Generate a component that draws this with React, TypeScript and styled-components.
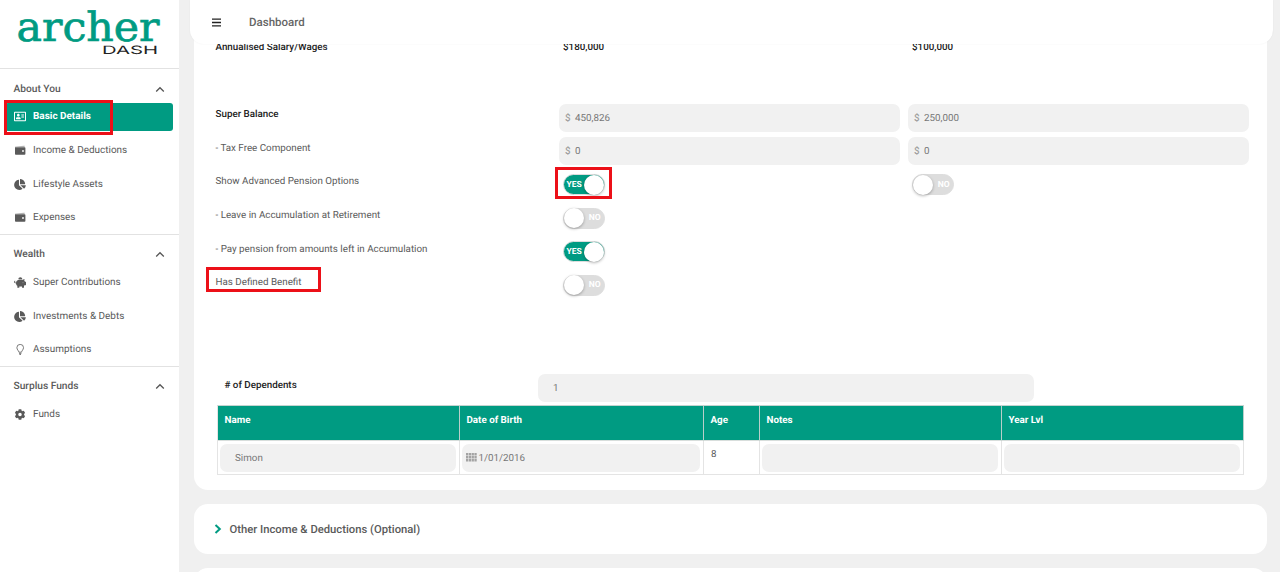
import React from "react";
import styled, { createGlobalStyle } from "styled-components";
import { FaRegAddressCard, FaChartPie, FaPiggyBank, FaCog } from "react-icons/fa";

const GREEN = "#009b82";
const PALE = "#f1f1f1";

const GlobalStyle = createGlobalStyle`
  * { box-sizing: border-box; }
  body {
    margin: 0;
    overflow: hidden;
    font-family: Roboto, "Liberation Sans", sans-serif;
    font-size: 9.8px;
    color: #5a5a5a;
    text-rendering: geometricPrecision;
  }
`;

const Page = styled.div`
  position: relative;
  display: flex;
  width: 1280px;
  height: 572px;
  overflow: hidden;
  background: #f0f0f0;
`;

const Sidebar = styled.nav`
  width: 179px;
  flex: none;
  background: #fff;
`;

const Brand = styled.div`
  height: 68px;
`;

const Section = styled.section`
  display: flex;
  flex-direction: column;
  border-top: 1px solid #e2e2e2;
`;

const SectionTitle = styled.div`
  display: flex;
  align-items: center;
  justify-content: space-between;
  height: 30px;
  padding: 10px 14px 0 13.5px;
  font-size: 10.2px;
  font-weight: 500;
`;

const NavItem = styled.a<{ $active?: boolean }>`
  display: flex;
  align-items: center;
  height: 27.7px;
  margin: 4px 6px 2px 5px;
  padding-left: 9px;
  gap: 7px;
  border-radius: 3px;
  font-size: 9.95px;
  color: ${(p) => (p.$active ? "#fff" : "#5a5a5a")};
  background: ${(p) => (p.$active ? GREEN : "transparent")};
  font-weight: ${(p) => (p.$active ? 700 : 400)};
  svg { width: 12px; height: 11px; flex: none; }
`;

const Main = styled.main`
  position: relative;
  flex: 1;
  min-width: 0;
  padding: 0 13px 0 15px;
`;

const Header = styled.header`
  position: absolute;
  top: 0;
  left: 11px;
  width: 1083px;
  height: 44px;
  display: flex;
  align-items: center;
  gap: 28px;
  padding-left: 22px;
  border-radius: 0 0 14px 14px;
  background: #fff;
  box-shadow: 0 0 2px rgba(0, 0, 0, 0.06);
  font-size: 11.5px;
  font-weight: 500;
  color: #666;
`;

const Card = styled.section<{ $height: number; $first?: boolean }>`
  height: ${(p) => p.$height}px;
  margin-bottom: 14px;
  padding: ${(p) => (p.$first ? "30px 17px 0 21.5px" : "0 20px")};
  border-radius: ${(p) => (p.$first ? "0 0 14px 14px" : "14px")};
  background: #fff;
`;

const FieldRow = styled.div`
  display: grid;
  grid-template-columns: 335.5px 341.5px 341.5px;
  column-gap: 7.5px;
  height: 33.65px;
`;

const Label = styled.div<{ $strong?: boolean; $indent?: number }>`
  padding: 8.2px 0 0 ${(p) => p.$indent ?? 0}px;
  line-height: 20px;
  color: ${(p) => (p.$strong ? "#222" : "#5a5a5a")};
  font-weight: ${(p) => (p.$strong ? 500 : 400)};
`;

const Money = styled.div`
  display: flex;
  align-items: center;
  height: 28px;
  margin-top: 6.8px;
  padding: 1px 0 0 6.5px;
  gap: 4.5px;
  border-radius: 7px;
  background: ${PALE};
  color: #777;
  i { font-style: normal; font-weight: 500; color: #a0a0a0; }
`;

const Toggle = styled.div<{ $on?: boolean }>`
  display: flex;
  align-items: center;
  justify-content: space-between;
  flex-direction: ${(p) => (p.$on ? "row" : "row-reverse")};
  width: 42px;
  height: 21px;
  margin: 9.8px 0 0 4px;
  padding: ${(p) => (p.$on ? "0 0 0 3px" : "0 3px 0 0")};
  border: 1px solid #ddd;
  border-radius: 11px;
  background: ${(p) => (p.$on ? GREEN : "#ddd")};
  color: #fff;
  font-size: 8.5px;
  font-weight: 700;
`;

const Knob = styled.span`
  width: 20px;
  height: 20px;
  border-radius: 50%;
  background: #fff;
  box-shadow: 0 1px 3px rgba(0, 0, 0, 0.3);
`;

const Spacer = styled.div<{ $h: number }>`
  height: ${(p) => p.$h}px;
`;

const DependentsRow = styled.div`
  display: flex;
  height: 31px;
  padding-left: 9px;
`;

const DependentsLabel = styled(Label)`
  width: 313.5px;
  padding-top: 1.7px;
`;

const Input = styled.div<{ $w?: number; $pad?: number }>`
  display: flex;
  align-items: center;
  gap: 1.5px;
  width: ${(p) => (p.$w ? `${p.$w}px` : "auto")};
  height: 28px;
  padding: 1px 0 0 ${(p) => p.$pad ?? 15}px;
  border-radius: 7px;
  background: ${PALE};
  color: #777;
`;

const Table = styled.div`
  display: grid;
  grid-template-columns: 242px 244px 56px 242px 242px;
  width: 1027px;
  margin-left: 1.5px;
  border-left: 1px solid #e4e4e4;
  border-top: 1px solid #c4d4d0;
`;

const HeadCell = styled.div`
  height: 35px;
  padding: 9.2px 6.5px 0;
  border-right: 1px solid #b9cfca;
  border-bottom: 1px solid #d8dedc;
  background: ${GREEN};
  color: #fff;
  font-weight: 700;
`;

const Cell = styled.div`
  height: 34px;
  padding: 3px 3px 0 2px;
  border-right: 1px solid #e4e4e4;
  border-bottom: 1px solid #e4e4e4;
`;

const AgeText = styled.div`
  padding: 5.5px 5px 0;
`;

const Expander = styled.div`
  display: flex;
  align-items: center;
  height: 50px;
  gap: 7.5px;
  padding-top: 1px;
  font-size: 11.25px;
  font-weight: 500;
`;

const Marker = styled.div<{ $x: number; $y: number; $w: number; $h: number }>`
  position: absolute;
  left: ${(p) => p.$x}px;
  top: ${(p) => p.$y}px;
  width: ${(p) => p.$w}px;
  height: ${(p) => p.$h}px;
  border: 3px solid #ec1018;
`;

const ChevronUp = () => (
  <svg width="10" height="7" viewBox="0 0 10 7" fill="none" stroke="#555" strokeWidth="1.3">
    <path d="M1.2 5.5 5 1.7 8.8 5.5" />
  </svg>
);

const WalletIcon = () => (
  <svg viewBox="0 0 12 11" fill="currentColor">
    <path d="M1 1.4 10.6 .7V1.7H1Z" opacity=".6" />
    <path fillRule="evenodd" d="M1 2.2H10.6Q11.4 2.2 11.4 3V9Q11.4 9.8 10.6 9.8H1.8Q1 9.8 1 9ZM9 5.1A.9.9 0 1 0 9 6.9.9.9 0 1 0 9 5.1Z" />
  </svg>
);

const BulbIcon = () => (
  <svg viewBox="0 0 12 11" fill="none" stroke="currentColor" strokeWidth=".8">
    <path d="M4.9 8.2C4.7 6.6 2.9 5.8 2.9 3.6A3.3 3.2 0 0 1 9.5 3.6C9.5 5.8 7.7 6.6 7.5 8.2ZM5 9.4H7.4M5.4 10.5H7" />
  </svg>
);

const DateGridIcon = () => (
  <svg width="11" height="10" viewBox="0 0 11 10" fill="#a3a3a3">
    {[0, 1, 2].map((r) =>
      [0, 1, 2, 3].map((c) => (
        <rect key={`${r}-${c}`} x={c * 2.8} y={r * 3} width="2.3" height="2.5" />
      ))
    )}
  </svg>
);

const Switch = ({ on }: { on?: boolean }) => (
  <Toggle $on={on}>
    <span>{on ? "YES" : "NO"}</span>
    <Knob />
  </Toggle>
);

const Amount = ({ value }: { value: string }) => (
  <Money>
    <i>$</i>
    <span>{value}</span>
  </Money>
);

const sections = [
  {
    title: "About You",
    items: [
      { label: "Basic Details", Icon: FaRegAddressCard, active: true },
      { label: "Income & Deductions", Icon: WalletIcon },
      { label: "Lifestyle Assets", Icon: FaChartPie },
      { label: "Expenses", Icon: WalletIcon },
    ],
  },
  {
    title: "Wealth",
    items: [
      { label: "Super Contributions", Icon: FaPiggyBank },
      { label: "Investments & Debts", Icon: FaChartPie },
      { label: "Assumptions", Icon: BulbIcon },
    ],
  },
  { title: "Surplus Funds", items: [{ label: "Funds", Icon: FaCog }] },
];

export default function App() {
  return (
    <Page>
      <GlobalStyle />
      <Sidebar>
        <Brand>
          <svg width="179" height="68">
            <text x="16.5" y="40.5" fontFamily="DejaVu Serif" fontSize="40.5" fill={GREEN} stroke={GREEN} strokeWidth=".7" textLength="143" lengthAdjust="spacingAndGlyphs">
              archer
            </text>
            <text x="102" y="54" fontFamily="Inter" fontSize="11.5" fill="#222" textLength="56" lengthAdjust="spacingAndGlyphs">
              DASH
            </text>
          </svg>
        </Brand>
        {sections.map((s) => (
          <Section key={s.title}>
            <SectionTitle>
              {s.title}
              <ChevronUp />
            </SectionTitle>
            {s.items.map(({ label, Icon, active }: any) => (
              <NavItem key={label} $active={active}>
                <Icon />
                {label}
              </NavItem>
            ))}
          </Section>
        ))}
      </Sidebar>
      <Main>
        <Card $height={489.5} $first>
          <FieldRow>
            <Label $strong>Annualised Salary/Wages</Label>
            <Label $strong $indent={4.5}>$180,000</Label>
            <Label $strong $indent={4.5}>$100,000</Label>
          </FieldRow>
          <Spacer $h={33.3} />
          <FieldRow>
            <Label $strong>Super Balance</Label>
            <Amount value="450,826" />
            <Amount value="250,000" />
          </FieldRow>
          <FieldRow>
            <Label>- Tax Free Component</Label>
            <Amount value="0" />
            <Amount value="0" />
          </FieldRow>
          <FieldRow>
            <Label>Show Advanced Pension Options</Label>
            <Switch on />
            <Switch />
          </FieldRow>
          <FieldRow>
            <Label>- Leave in Accumulation at Retirement</Label>
            <Switch />
          </FieldRow>
          <FieldRow>
            <Label>- Pay pension from amounts left in Accumulation</Label>
            <Switch on />
          </FieldRow>
          <FieldRow>
            <Label>Has Defined Benefit</Label>
            <Switch />
          </FieldRow>
          <Spacer $h={75.2} />
          <DependentsRow>
            <DependentsLabel $strong>
              # of Dependents
            </DependentsLabel>
            <Input $w={496}>1</Input>
          </DependentsRow>
          <Table>
            {["Name", "Date of Birth", "Age", "Notes", "Year Lvl"].map((h) => (
              <HeadCell key={h}>{h}</HeadCell>
            ))}
            <Cell><Input>Simon</Input></Cell>
            <Cell><Input $pad={4}><DateGridIcon />1/01/2016</Input></Cell>
            <Cell><AgeText>8</AgeText></Cell>
            <Cell><Input /></Cell>
            <Cell><Input /></Cell>
          </Table>
        </Card>
        <Card $height={50.5}>
          <Expander>
            <svg width="8" height="10" viewBox="0 0 8 10" fill="none" stroke={GREEN} strokeWidth="2">
              <path d="M1.5 1 5.8 5 1.5 9" />
            </svg>
            Other Income &amp; Deductions (Optional)
          </Expander>
        </Card>
        <Card $height={50.5} />
        <Header>
          <svg width="9" height="9" viewBox="0 0 9 9" stroke="#222" strokeWidth="1.3">
            <path d="M0 1.2h9M0 4.5h9M0 7.8h9" />
          </svg>
          Dashboard
        </Header>
      </Main>
      <Marker $x={4} $y={100} $w={109} $h={35} />
      <Marker $x={555} $y={167} $w={57} $h={32} />
      <Marker $x={206} $y={267} $w={115} $h={25} />
    </Page>
  );
}
